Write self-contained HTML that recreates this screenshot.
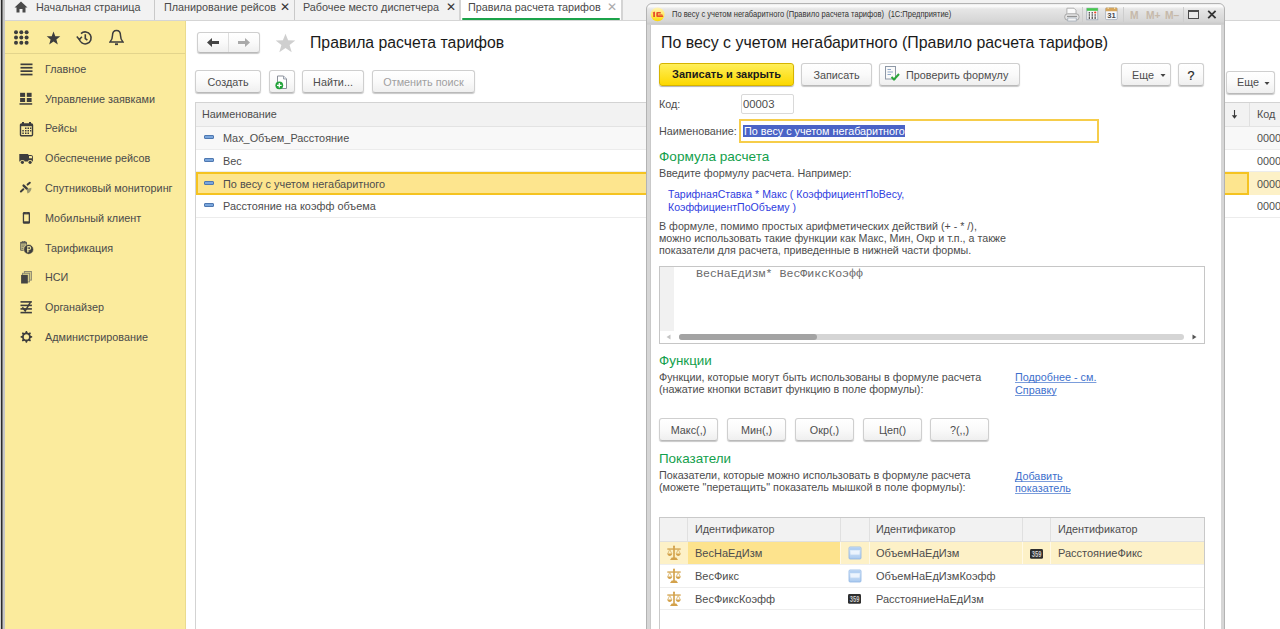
<!DOCTYPE html>
<html><head><meta charset="utf-8">
<style>
*{box-sizing:border-box}
html,body{margin:0;padding:0;width:1280px;height:629px;overflow:hidden;background:#fff;font-family:"Liberation Sans",sans-serif;font-size:10.8px;color:#4d4d4d}
.a{position:absolute}
.t{position:absolute;white-space:nowrap;line-height:12px}
/* frame */
#lf0{left:0;top:0;width:1px;height:629px;background:#cfcfcf}
#lf1{left:1px;top:0;width:1px;height:629px;background:#2a2a2a;box-shadow:1px 0 0 #7a7a7a}
#lf2{left:3px;top:0;width:2px;height:629px;background:#c6c6c6}
/* tab bar */
#tabs{left:5px;top:0;width:1275px;height:21px;background:#f2f2f2;border-bottom:1px solid #d5d5d5}
.tdiv{position:absolute;top:0;width:1px;height:20px;background:#c9c9c9}
/* sidebar */
#side{left:5px;top:21px;width:181px;height:608px;background:#fbeb9d;border-right:1px solid #eadb8e}
#sidesep{left:5px;top:53px;width:180px;height:1px;background:#e3d48c}
.si{position:absolute;left:45px;color:#4a4a4a}
/* buttons */
.btn{position:absolute;border:1px solid #cfcfcf;border-bottom-color:#b9b9b9;border-radius:3px;background:linear-gradient(#fff,#fafafa 50%,#efefef);box-shadow:0 1px 1px rgba(0,0,0,.22);text-align:center;color:#4d4d4d;line-height:23px;font-size:10.8px}
.bl{width:10px;height:4px;background:#7aa6dc;border:1px solid #4f78b0;border-radius:1px}
.g{color:#13a04c}
.lk{color:#3d6fcc;text-decoration:underline;text-decoration-color:#7b9ddb;text-decoration-skip-ink:none;text-underline-offset:1px}
</style></head>
<body>
<div id="lf0" class="a"></div><div id="lf1" class="a"></div><div id="lf2" class="a"></div>
<div id="tabs" class="a"></div>
<!-- tabs -->
<svg class="a" style="left:14px;top:1px" width="14" height="12" viewBox="0 0 14 12"><path d="M7 0.5 L13.5 6.5 L11.5 6.5 L11.5 11.5 L8.5 11.5 L8.5 8 L5.5 8 L5.5 11.5 L2.5 11.5 L2.5 6.5 L0.5 6.5 Z" fill="#4a4a4a"/></svg>
<div class="t" style="left:36px;top:1px;color:#4a4a4a">Начальная страница</div>
<div class="tdiv" style="left:154px"></div>
<div class="t" style="left:164px;top:1px;color:#4a4a4a">Планирование рейсов</div>
<div class="t" style="left:280px;top:1px;color:#333;font-size:12px">✕</div>
<div class="tdiv" style="left:294px"></div>
<div class="t" style="left:303px;top:1px;color:#4a4a4a">Рабочее место диспетчера</div>
<div class="t" style="left:446px;top:1px;color:#333;font-size:12px">✕</div>
<div class="tdiv" style="left:459px;width:2px;background:#d4d4d4"></div>
<div class="a" style="left:461px;top:0;width:160px;height:20px;background:#fff"></div>
<div class="a" style="left:462px;top:18px;width:158px;height:2px;background:#1ba34a;border-radius:1px"></div>
<div class="t" style="left:468px;top:1px;color:#4a4a4a">Правила расчета тарифов</div>
<div class="t" style="left:607px;top:1px;color:#aaa;font-size:12px">✕</div>
<div class="tdiv" style="left:621px;width:2px;background:#d4d4d4"></div>

<!-- sidebar -->
<div id="side" class="a"></div>
<div id="sidesep" class="a"></div>
<div class="t si" style="top:63px">Главное</div>
<div class="t si" style="top:93px">Управление заявками</div>
<div class="t si" style="top:122px">Рейсы</div>
<div class="t si" style="top:152px">Обеспечение рейсов</div>
<div class="t si" style="top:182px">Спутниковый мониторинг</div>
<div class="t si" style="top:212px">Мобильный клиент</div>
<div class="t si" style="top:242px">Тарификация</div>
<div class="t si" style="top:271px">НСИ</div>
<div class="t si" style="top:301px">Органайзер</div>
<div class="t si" style="top:331px">Администрирование</div>


<!-- sidebar icons -->
<svg class="a" style="left:13px;top:30px" width="17" height="16" viewBox="0 0 17 16" fill="#3d3d3d">
<circle cx="3" cy="2.3" r="2"/><circle cx="8.3" cy="2.3" r="2"/><circle cx="13.6" cy="2.3" r="2"/>
<circle cx="3" cy="7.5" r="2"/><circle cx="8.3" cy="7.5" r="2"/><circle cx="13.6" cy="7.5" r="2"/>
<circle cx="3" cy="12.7" r="2"/><circle cx="8.3" cy="12.7" r="2"/><circle cx="13.6" cy="12.7" r="2"/></svg>
<svg class="a" style="left:46px;top:31px" width="15" height="14" viewBox="0 0 15 14"><path d="M7.5 0.6 L9.3 5.2 L14.3 5.3 L10.4 8.4 L11.8 13.4 L7.5 10.5 L3.2 13.4 L4.6 8.4 L0.7 5.3 L5.7 5.2 Z" fill="#3d3d3d"/></svg>
<svg class="a" style="left:76px;top:30px" width="17" height="16" viewBox="0 0 17 16" fill="none" stroke="#3d3d3d" stroke-width="1.6"><path d="M3.2 8.5 A6 6 0 1 0 5 3.6"/><path d="M0.8 6.6 L3.3 9.6 L5.9 6.8" stroke-width="1.5"/><path d="M9.3 4.2 V8.6 L11.4 10.2"/></svg>
<svg class="a" style="left:109px;top:29px" width="15" height="17" viewBox="0 0 15 17" fill="none" stroke="#3d3d3d" stroke-width="1.5"><path d="M7.5 1.5 C4.5 1.5 3.5 4 3.5 6.5 C3.5 10 2.5 11.5 1 13 H14 C12.5 11.5 11.5 10 11.5 6.5 C11.5 4 10.5 1.5 7.5 1.5 Z"/><path d="M6 15.2 H9" stroke-width="1.8"/></svg>

<svg class="a" style="left:20px;top:63px" width="13" height="13" viewBox="0 0 13 13" fill="#3d3d3d"><rect x="0.5" y="0.5" width="12" height="1.7"/><rect x="0.5" y="3.9" width="12" height="1.7"/><rect x="0.5" y="7.3" width="12" height="1.7"/><rect x="0.5" y="10.7" width="12" height="1.7"/></svg>
<svg class="a" style="left:19px;top:92px" width="14" height="14" viewBox="0 0 14 14" fill="#3d3d3d"><rect x="1.1" y="0.8" width="5" height="4.1"/><rect x="7.8" y="0.8" width="4.8" height="4.1"/><rect x="1.1" y="6" width="5" height="4"/><rect x="7.8" y="6" width="4.8" height="4"/><rect x="0.5" y="11.2" width="12.7" height="1.5"/></svg>
<svg class="a" style="left:19px;top:121px" width="15" height="16" viewBox="0 0 15 16"><rect x="1.5" y="3" width="12" height="11.8" rx="1" fill="none" stroke="#3d3d3d" stroke-width="1.4"/><rect x="1.5" y="3" width="12" height="2.2" fill="#3d3d3d"/><rect x="3" y="1" width="2" height="3" fill="#3d3d3d"/><rect x="10" y="1" width="2" height="3" fill="#3d3d3d"/><g fill="#3d3d3d"><rect x="6" y="6.5" width="1.5" height="1.5"/><rect x="8.5" y="6.5" width="1.5" height="1.5"/><rect x="11" y="6.5" width="1.3" height="1.5"/><rect x="3.3" y="9" width="1.5" height="1.5"/><rect x="6" y="9" width="1.5" height="1.5"/><rect x="8.5" y="9" width="1.5" height="1.5"/><rect x="11" y="9" width="1.3" height="1.5"/><rect x="3.3" y="11.5" width="1.5" height="1.5"/><rect x="6" y="11.5" width="1.5" height="1.5"/><rect x="8.5" y="11.5" width="1.5" height="1.5"/></g></svg>
<svg class="a" style="left:19px;top:153px" width="16" height="12" viewBox="0 0 16 12"><path d="M0.3 1 H9.3 V2 H12 C13 2 13.9 2.8 13.9 3.8 V8.4 H0.3 Z" fill="#3d3d3d"/><path d="M10 3 H12.3 C12.7 3 13 3.6 13 4 V5.2 H10 Z" fill="#fbeb9d"/><circle cx="3.4" cy="9.3" r="2.4" fill="#fbeb9d"/><circle cx="11.1" cy="9.3" r="2.4" fill="#fbeb9d"/><circle cx="3.4" cy="9.3" r="1.6" fill="#3d3d3d"/><circle cx="11.1" cy="9.3" r="1.6" fill="#3d3d3d"/></svg>
<svg class="a" style="left:19px;top:181px" width="14" height="14" viewBox="0 0 14 14"><g stroke="#3d3d3d" stroke-linecap="round"><path d="M8.6 3.6 L10.8 1.7" stroke-width="2"/><path d="M1.9 10.5 L4.3 8.3" stroke-width="2"/><path d="M4.6 4.6 L7.8 7.6" stroke-width="2.4"/></g><path d="M7.6 8 L12.4 6.8 C12.6 9.5 11 11.8 8.4 12.5 Z" fill="#8a8a6a" opacity="0.85"/></svg>
<svg class="a" style="left:22px;top:211px" width="9" height="14" viewBox="0 0 9 14"><rect x="0.8" y="0.9" width="7.2" height="11.9" rx="1.3" fill="#3d3d3d"/><rect x="2.1" y="3.4" width="4.6" height="6.9" fill="#fbeb9d"/><rect x="3.4" y="1.7" width="2" height="0.6" fill="#7a7460"/></svg>
<svg class="a" style="left:19px;top:240px" width="15" height="15" viewBox="0 0 15 15"><rect x="1.2" y="1.8" width="6.8" height="9" rx="0.8" fill="#5e5e56"/><rect x="2.2" y="3.6" width="4.8" height="6.2" fill="#d8cf8e"/><g fill="#6a6a5e"><rect x="2.6" y="4.6" width="4" height="0.9"/><rect x="2.6" y="6.4" width="3" height="0.9"/><rect x="2.6" y="8.2" width="2" height="0.9"/></g><rect x="3.2" y="1" width="1.4" height="2" fill="#5e5e56"/><rect x="5" y="1" width="1.4" height="2" fill="#5e5e56"/><circle cx="9.6" cy="9.4" r="4.9" fill="#3d3d3d" stroke="#fbeb9d" stroke-width="0.6"/><path d="M8.8 12.6 V6.6 H10.2 C11.3 6.6 11.7 7.3 11.7 8.1 C11.7 8.9 11.1 9.5 10.2 9.5 H8" stroke="#e9df9c" stroke-width="1.1" fill="none"/><path d="M8 11 H10.3" stroke="#e9df9c" stroke-width="0.9"/></svg>
<svg class="a" style="left:20px;top:270px" width="13" height="14" viewBox="0 0 13 14"><rect x="4.4" y="1.5" width="7" height="8.6" fill="#d9cf8a" stroke="#8d8a72" stroke-width="1"/><rect x="2.5" y="3.3" width="7" height="8.6" fill="#d9cf8a" stroke="#8d8a72" stroke-width="1"/><rect x="1.1" y="4.9" width="6.7" height="8.6" fill="#444"/></svg>
<svg class="a" style="left:20px;top:300px" width="14" height="14" viewBox="0 0 14 14"><g fill="#3d3d3d"><rect x="0.5" y="1.1" width="11.4" height="1.6"/><rect x="0.5" y="4.6" width="11.4" height="1.6"/><rect x="0.5" y="8.1" width="11.4" height="1.6"/><rect x="0.5" y="11.8" width="11.4" height="1.6"/></g><path d="M10.5 2.2 L5.2 10.9 L2.4 7.3" stroke="#3d3d3d" stroke-width="1.5" fill="none"/></svg>
<svg class="a" style="left:20px;top:330px" width="14" height="14" viewBox="0 0 14 14"><path d="M9.70 5.50 L12.20 6.30 L12.20 7.50 L9.70 8.30 Z M9.72 8.24 L10.93 10.58 L10.08 11.43 L7.74 10.22 Z M7.80 10.20 L7.00 12.70 L5.80 12.70 L5.00 10.20 Z M5.06 10.22 L2.72 11.43 L1.87 10.58 L3.08 8.24 Z M3.10 8.30 L0.60 7.50 L0.60 6.30 L3.10 5.50 Z M3.08 5.56 L1.87 3.22 L2.72 2.37 L5.06 3.58 Z M5.00 3.60 L5.80 1.10 L7.00 1.10 L7.80 3.60 Z M7.74 3.58 L10.08 2.37 L10.93 3.22 L9.72 5.56 Z " fill="#3d3d3d"/><circle cx="6.4" cy="6.9" r="3.45" fill="none" stroke="#3d3d3d" stroke-width="1.7"/></svg>

<!-- main -->
<div class="btn" style="left:197px;top:32px;width:63px;height:21px"></div>
<div class="a" style="left:228px;top:33px;width:1px;height:19px;background:#dedede"></div>
<svg class="a" style="left:206px;top:37px" width="14" height="11" viewBox="0 0 14 11"><path d="M1 5.4 L6 0.9 V4 H13 V6.9 H6 V9.9 Z" fill="#454545"/></svg>
<svg class="a" style="left:237px;top:37px" width="14" height="11" viewBox="0 0 14 11"><path d="M13 5.4 L8 0.9 V4 H1 V6.9 H8 V9.9 Z" fill="#a9a9a9"/></svg>
<svg class="a" style="left:275px;top:33px" width="21" height="20" viewBox="0 0 21 20"><path d="M10.5 0.7 L13.1 7.3 L20.3 7.5 L14.6 11.9 L16.7 19.2 L10.5 15 L4.3 19.2 L6.4 11.9 L0.7 7.5 L7.9 7.3 Z" fill="#cfcfcf"/></svg>
<div class="t" style="left:310px;top:34px;font-size:15.8px;line-height:18px;color:#1a1a1a">Правила расчета тарифов</div>
<div class="btn" style="left:195px;top:70px;width:66px;height:23px">Создать</div>
<div class="btn" style="left:269px;top:70px;width:26px;height:23px"></div>
<svg class="a" style="left:275px;top:75px" width="14" height="15" viewBox="0 0 14 15"><path d="M2.5 1 H8.5 L11.5 4 V13.5 H2.5 Z" fill="#fff" stroke="#8a8f99" stroke-width="1"/><path d="M8.5 1 V4 H11.5" fill="#dfe6ef" stroke="#8a8f99" stroke-width="0.8"/><circle cx="4.3" cy="10.3" r="3.9" fill="#22a33a"/><path d="M4.3 8 V12.6 M2 10.3 H6.6" stroke="#fff" stroke-width="1.3"/></svg>
<div class="btn" style="left:302px;top:70px;width:62px;height:23px">Найти...</div>
<div class="btn" style="left:372px;top:70px;width:103px;height:23px;color:#a0a0a0">Отменить поиск</div>
<div class="btn" style="left:1226px;top:71px;width:49px;height:23px;text-align:left;padding-left:10px;line-height:21px">Еще</div><svg class="a" style="left:1264px;top:82px" width="6" height="3" viewBox="0 0 6 3"><path d="M0.5 0 H5.5 L3 3 Z" fill="#444"/></svg>

<!-- list -->
<div class="a" style="left:195px;top:102px;width:1px;height:527px;background:#d3d3d3"></div>
<div class="a" style="left:196px;top:102px;width:1084px;height:1px;background:#d3d3d3"></div>
<div class="a" style="left:196px;top:103px;width:1084px;height:23px;background:#f2f2f2"></div>
<div class="a" style="left:196px;top:126px;width:1084px;height:1px;background:#e3e3e3"></div>
<div class="t" style="left:202px;top:108px">Наименование</div>
<div class="a" style="left:1249px;top:103px;width:1px;height:23px;background:#e0e0e0"></div>
<svg class="a" style="left:1231px;top:110px" width="7" height="9" viewBox="0 0 7 9"><path d="M3.5 0 V7" stroke="#3a3a3a" stroke-width="1.1"/><path d="M0.8 5.3 H6.2 L3.5 8.8 Z" fill="#3a3a3a"/></svg>
<div class="t" style="left:1257px;top:108px">Код</div>
<!-- rows -->
<div class="a" style="left:196px;top:127px;width:1084px;height:22px;background:#f8f8f8"></div>
<div class="a" style="left:196px;top:149px;width:1084px;height:1px;background:#ececec"></div>
<div class="a" style="left:196px;top:171px;width:1084px;height:1px;background:#ececec"></div>
<div class="a" style="left:196px;top:172px;width:1053px;height:23px;background:#fde58e;border:2px solid #f5c320;border-right:none"></div>
<div class="a" style="left:1247px;top:172px;width:2px;height:23px;background:#f5c320"></div>
<div class="a" style="left:1249px;top:172px;width:31px;height:23px;background:#fdf1c7"></div>
<div class="a" style="left:196px;top:217px;width:1084px;height:1px;background:#ececec"></div>
<div class="a bl" style="left:204px;top:135px"></div>
<div class="a bl" style="left:204px;top:158px"></div>
<div class="a bl" style="left:204px;top:181px"></div>
<div class="a bl" style="left:204px;top:203px"></div>
<div class="t" style="left:223px;top:132px;font-size:10.9px">Max_Объем_Расстояние</div>
<div class="t" style="left:223px;top:155px;font-size:10.9px">Вес</div>
<div class="t" style="left:223px;top:178px;font-size:10.9px">По весу с учетом негабаритного</div>
<div class="t" style="left:223px;top:200px;font-size:10.9px">Расстояние на коэфф объема</div>
<div class="t" style="left:1257px;top:132px">00001</div>
<div class="t" style="left:1257px;top:155px">00002</div>
<div class="t" style="left:1257px;top:178px">00003</div>
<div class="t" style="left:1257px;top:200px">00004</div>

<!-- dialog -->
<div class="a" style="left:646px;top:3px;width:579px;height:640px;border-radius:6px 6px 0 0;background:#c9c9c9;border:1px solid #b3b3b3"></div>
<div class="a" style="left:647px;top:4px;width:577px;height:21px;border-radius:5px 5px 0 0;background:linear-gradient(#ececec 0px,#fdfdfd 2px,#e6e6e6 5px,#d6d6d6 17px,#cacaca 20px,#d4d4d4 21px)"></div>
<div class="a" style="left:647px;top:25px;width:3px;height:610px;background:#d6d6d6"></div>
<div class="a" style="left:1221px;top:25px;width:3px;height:610px;background:#d6d6d6"></div>
<div class="a" style="left:651px;top:25px;width:570px;height:610px;background:#fff"></div>
<!-- title bar -->
<svg class="a" style="left:650px;top:7px" width="15" height="15" viewBox="0 0 15 15"><defs><linearGradient id="lg" x1="0" y1="0" x2="0" y2="1"><stop offset="0" stop-color="#fff3b8"/><stop offset="0.5" stop-color="#ffec6a"/><stop offset="1" stop-color="#ffd800"/></linearGradient></defs><circle cx="7.6" cy="7.4" r="6.9" fill="url(#lg)"/><path d="M2.6 5.8 L4 4.8 H5 V9.9 H3.2 V6.5 Z" fill="#e8502a"/><path d="M6.3 6 Q6.3 5 7.3 5 H10.8 V6.6 H8 V8.3 H12.8 L13.3 9.9 H7.3 Q6.3 9.9 6.3 8.9 Z" fill="#e8502a"/><rect x="8.4" y="7" width="4" height="0.9" fill="#f08a3a"/></svg>
<div class="t" style="left:672px;top:9px;font-size:8.2px;line-height:11px;color:#333;transform:scaleX(0.92);transform-origin:0 0">По весу с учетом негабаритного (Правило расчета тарифов)&nbsp; (1С:Предприятие)</div>
<svg class="a" style="left:1064px;top:7px" width="16" height="15" viewBox="0 0 16 15"><path d="M2.9 1.2 H10 L12 3.2 V7.5 H2.9 Z" fill="#fafafa" stroke="#a8a8a8" stroke-width="0.9"/><rect x="0.7" y="6.8" width="14.4" height="6.4" rx="3" fill="#e4e4e4" stroke="#a6a6a6" stroke-width="1"/><path d="M3 9.4 H13" stroke="#8a8a8a" stroke-width="1"/><rect x="3.8" y="11" width="8.4" height="3" fill="#f4f4f4" stroke="#9aa6b4" stroke-width="0.7"/></svg>
<div class="a" style="left:1082px;top:7px;width:1px;height:15px;background:#cdcdcd"></div>
<svg class="a" style="left:1086px;top:7px" width="13" height="14" viewBox="0 0 13 14"><rect x="0.8" y="1.2" width="11" height="11.6" fill="#f6f6f6" stroke="#9aa4b4" stroke-width="0.8"/><rect x="0.8" y="1.2" width="11" height="2.6" fill="#45c84e"/><g fill="#555"><rect x="2.7" y="5" width="1.3" height="7"/><rect x="5.6" y="5" width="1.3" height="7"/><rect x="8.5" y="7" width="1.3" height="5"/></g><g fill="#f6f6f6"><rect x="2" y="6.6" width="8.5" height="0.6"/><rect x="2" y="8.8" width="8.5" height="0.6"/></g><circle cx="9.2" cy="5.5" r="1.1" fill="#ee4422"/></svg>
<svg class="a" style="left:1105px;top:7px" width="13" height="14" viewBox="0 0 13 14"><rect x="0.6" y="0.8" width="11.6" height="11.8" rx="1" fill="#f7f9fc" stroke="#a3abb8" stroke-width="0.8"/><path d="M0.6 1.8 Q0.6 0.8 1.6 0.8 H11.2 Q12.2 0.8 12.2 1.8 V4.2 H0.6 Z" fill="#d6a65c"/><rect x="2.6" y="0" width="1.2" height="2" fill="#f0dcb0"/><rect x="9" y="0" width="1.2" height="2" fill="#f0dcb0"/><text x="2.3" y="11.4" font-family="Liberation Sans" font-weight="bold" font-size="7.6" fill="#4a4a4a">31</text></svg>
<div class="a" style="left:1123px;top:7px;width:1px;height:15px;background:#cdcdcd"></div>
<div class="t" style="left:1130px;top:8.5px;font-size:11.8px;font-weight:bold;color:#c6b9aa;line-height:12px;transform:scaleX(0.87);transform-origin:0 0">M</div>
<div class="t" style="left:1146px;top:8.5px;font-size:11.8px;font-weight:bold;color:#c6b9aa;line-height:12px;transform:scaleX(0.87);transform-origin:0 0">M+</div>
<div class="t" style="left:1165px;top:8.5px;font-size:11.8px;font-weight:bold;color:#c6b9aa;line-height:12px;transform:scaleX(0.87);transform-origin:0 0">M&#8211;</div>
<div class="a" style="left:1183px;top:7px;width:1px;height:15px;background:#cdcdcd"></div>
<div class="a" style="left:1188px;top:10px;width:11px;height:9px;border:1px solid #4a4a4a;border-top-width:2px;background:#e9e9e9"></div>
<svg class="a" style="left:1207px;top:10px" width="10" height="9" viewBox="0 0 10 9"><path d="M1.2 0.8 L8.6 8.2 M8.6 0.8 L1.2 8.2" stroke="#333" stroke-width="1.8"/></svg>

<!-- dialog content -->
<div class="t" style="left:661px;top:34px;font-size:15.9px;line-height:18px;color:#1a1a1a">По весу с учетом негабаритного (Правило расчета тарифов)</div>
<div class="a" style="left:659px;top:63px;width:135px;height:23px;border:1px solid #d6b400;border-radius:3px;background:linear-gradient(#ffef5a,#fcd800);box-shadow:0 1px 1px rgba(0,0,0,.3)"></div>
<div class="t" style="left:659px;top:68px;width:135px;text-align:center;font-weight:bold;font-size:11px;color:#1a1a1a">Записать и закрыть</div>
<div class="btn" style="left:801px;top:63px;width:71px;height:23px">Записать</div>
<div class="btn" style="left:879px;top:63px;width:141px;height:23px;text-align:left;padding-left:26px">Проверить формулу</div>
<svg class="a" style="left:885px;top:66px" width="15" height="16" viewBox="0 0 15 16"><rect x="0.5" y="0.5" width="10" height="12.5" fill="#fafafa" stroke="#8e98a6" stroke-width="1"/><g stroke="#8fa8c8" stroke-width="1"><path d="M2.5 3.5 H6"/><path d="M2.5 6 H8"/><path d="M2.5 8.5 H6"/></g><path d="M6.5 11 L9 13.5 L14 8" stroke="#2aa53a" stroke-width="2" fill="none"/></svg>
<div class="btn" style="left:1121px;top:63px;width:50px;height:23px;text-align:left;padding-left:10px">Еще</div><svg class="a" style="left:1160px;top:74px" width="6" height="3" viewBox="0 0 6 3"><path d="M0.5 0 H5.5 L3 3 Z" fill="#444"/></svg>
<div class="btn" style="left:1178px;top:63px;width:26px;height:23px;color:#222;font-size:12.5px;line-height:24px;-webkit-text-stroke:0.2px #222">?</div>

<div class="t" style="left:659px;top:98px">Код:</div>
<div class="a" style="left:741px;top:94px;width:53px;height:20px;border:1px solid #d9d9d9;border-radius:2px"></div>
<div class="t" style="left:743px;top:98px;font-size:11.3px">00003</div>
<div class="t" style="left:659px;top:125px">Наименование:</div>
<div class="a" style="left:739px;top:119px;width:360px;height:24px;border:2px solid #f6cd4a"></div>
<div class="a" style="left:743px;top:125px;width:162px;height:12px;background:#4a63c6"></div>
<div class="t" style="left:744px;top:125px;color:#fff">По весу с учетом негабаритного</div>

<div class="t g" style="left:659px;top:149px;font-size:13.6px;line-height:16px">Формула расчета</div>
<div class="t" style="left:659px;top:167px">Введите формулу расчета. Например:</div>
<div class="t" style="left:668px;top:188px;color:#3040e0;line-height:13px;font-size:10.55px">ТарифнаяСтавка * Макс ( КоэффициентПоВесу,<br>КоэффициентПоОбъему )</div>
<div class="t" style="left:659px;top:220px;line-height:12.2px;font-size:10.7px">В формуле, помимо простых арифметических действий (+ - * /),<br>можно использовать такие функции как Макс, Мин, Окр и т.п., а также<br>показатели для расчета, приведенные в нижней части формы.</div>

<div class="a" style="left:659px;top:266px;width:546px;height:78px;border:1px solid #c6c6c6"></div>
<div class="a" style="left:660px;top:267px;width:14px;height:64px;background:#f1f1f1"></div>
<div class="t" style="left:696px;top:268px;font-family:'Liberation Mono',monospace;font-size:11.6px;color:#6a6a6a">ВесНаЕдИзм* ВесФиксКоэфф</div>
<div class="a" style="left:679px;top:334px;width:505px;height:6px;border-radius:3px;background:#d5d5d5"></div>
<div class="a" style="left:679px;top:334px;width:138px;height:6px;border-radius:3px;background:#a3a3a3"></div>
<svg class="a" style="left:666px;top:334px" width="5" height="6" viewBox="0 0 5 6"><path d="M4.5 0.5 L0.5 3 L4.5 5.5 Z" fill="#c4c4c4"/></svg>
<svg class="a" style="left:1192px;top:334px" width="5" height="6" viewBox="0 0 5 6"><path d="M0.5 0.5 L4.5 3 L0.5 5.5 Z" fill="#555"/></svg>

<div class="t g" style="left:659px;top:353px;font-size:13.4px;line-height:16px">Функции</div>
<div class="t" style="left:659px;top:371px;line-height:12.3px">Функции, которые могут быть использованы в формуле расчета<br>(нажатие кнопки вставит функцию в поле формулы):</div>
<div class="t lk" style="left:1015px;top:371px;line-height:12.6px">Подробнее - см.<br>Справку</div>
<div class="btn" style="left:659px;top:418px;width:59px;height:23px">Макс(,)</div>
<div class="btn" style="left:727px;top:418px;width:59px;height:23px">Мин(,)</div>
<div class="btn" style="left:795px;top:418px;width:59px;height:23px">Окр(,)</div>
<div class="btn" style="left:863px;top:418px;width:59px;height:23px">Цеп()</div>
<div class="btn" style="left:930px;top:418px;width:59px;height:23px">?(,,)</div>

<div class="t g" style="left:659px;top:451px;font-size:13.4px;line-height:16px">Показатели</div>
<div class="t" style="left:659px;top:469px;line-height:12px">Показатели, которые можно использовать в формуле расчета<br>(можете "перетащить" показатель мышкой в поле формулы):</div>
<div class="t lk" style="left:1015px;top:470px;line-height:12px">Добавить<br>показатель</div>

<!-- indicators table -->
<div class="a" style="left:659px;top:517px;width:546px;height:120px;border:1px solid #c9c9c9"></div>
<div class="a" style="left:660px;top:518px;width:544px;height:23px;background:#f2f2f2"></div>
<div class="a" style="left:660px;top:541px;width:544px;height:1px;background:#e0e0e0"></div>
<div class="a" style="left:687px;top:518px;width:1px;height:23px;background:#e0e0e0"></div>
<div class="a" style="left:840px;top:518px;width:1px;height:23px;background:#e0e0e0"></div>
<div class="a" style="left:869px;top:518px;width:1px;height:23px;background:#e0e0e0"></div>
<div class="a" style="left:1022px;top:518px;width:1px;height:23px;background:#e0e0e0"></div>
<div class="a" style="left:1050px;top:518px;width:1px;height:23px;background:#e0e0e0"></div>
<div class="t" style="left:695px;top:523px">Идентификатор</div>
<div class="t" style="left:876px;top:523px">Идентификатор</div>
<div class="t" style="left:1058px;top:523px">Идентификатор</div>
<div class="a" style="left:660px;top:542px;width:544px;height:22px;background:#fdf1c7"></div>
<div class="a" style="left:688px;top:542px;width:152px;height:22px;background:#fde38d"></div>
<div class="a" style="left:840px;top:542px;width:1px;height:22px;background:#fff9e6"></div>
<div class="a" style="left:869px;top:542px;width:1px;height:22px;background:#fff9e6"></div>
<div class="a" style="left:1022px;top:542px;width:1px;height:22px;background:#fff9e6"></div>
<div class="a" style="left:1050px;top:542px;width:1px;height:22px;background:#fff9e6"></div>
<div class="a" style="left:660px;top:564px;width:544px;height:1px;background:#eeeeee"></div>
<div class="a" style="left:660px;top:587px;width:544px;height:1px;background:#eeeeee"></div>
<div class="a" style="left:660px;top:609px;width:544px;height:1px;background:#eeeeee"></div>
<div class="t" style="left:695px;top:547px;font-size:11px">ВесНаЕдИзм</div>
<div class="t" style="left:876px;top:547px;font-size:11px">ОбъемНаЕдИзм</div>
<div class="t" style="left:1058px;top:547px;font-size:11px">РасстояниеФикс</div>
<div class="t" style="left:695px;top:570px;font-size:11px">ВесФикс</div>
<div class="t" style="left:876px;top:570px;font-size:11px">ОбъемНаЕдИзмКоэфф</div>
<div class="t" style="left:695px;top:593px;font-size:11px">ВесФиксКоэфф</div>
<div class="t" style="left:876px;top:593px;font-size:11px">РасстояниеНаЕдИзм</div>
<svg class="a" style="left:664px;top:544px" width="20" height="20" viewBox="0 0 20 20"><g fill="#d3a14a"><rect x="9.2" y="2.5" width="1.6" height="12"/><path d="M6 16 H14 L12.3 13.6 H7.7 Z"/><rect x="3.3" y="4.4" width="13.4" height="1.3"/><path d="M3.3 9.6 H8.2 C8.1 11.3 7 12 5.75 12 C4.5 12 3.4 11.3 3.3 9.6 Z"/><path d="M11.8 9.6 H16.7 C16.6 11.3 15.5 12 14.25 12 C13 12 11.9 11.3 11.8 9.6 Z"/><circle cx="10" cy="2.6" r="1"/></g><g stroke="#d8b060" stroke-width="0.8" fill="none"><path d="M5.75 5.4 L3.7 9.8 M5.75 5.4 L7.8 9.8 M14.25 5.4 L12.2 9.8 M14.25 5.4 L16.3 9.8"/></g></svg>
<svg class="a" style="left:664px;top:567px" width="20" height="20" viewBox="0 0 20 20"><g fill="#d3a14a"><rect x="9.2" y="2.5" width="1.6" height="12"/><path d="M6 16 H14 L12.3 13.6 H7.7 Z"/><rect x="3.3" y="4.4" width="13.4" height="1.3"/><path d="M3.3 9.6 H8.2 C8.1 11.3 7 12 5.75 12 C4.5 12 3.4 11.3 3.3 9.6 Z"/><path d="M11.8 9.6 H16.7 C16.6 11.3 15.5 12 14.25 12 C13 12 11.9 11.3 11.8 9.6 Z"/><circle cx="10" cy="2.6" r="1"/></g><g stroke="#d8b060" stroke-width="0.8" fill="none"><path d="M5.75 5.4 L3.7 9.8 M5.75 5.4 L7.8 9.8 M14.25 5.4 L12.2 9.8 M14.25 5.4 L16.3 9.8"/></g></svg>
<svg class="a" style="left:664px;top:590px" width="20" height="20" viewBox="0 0 20 20"><g fill="#d3a14a"><rect x="9.2" y="2.5" width="1.6" height="12"/><path d="M6 16 H14 L12.3 13.6 H7.7 Z"/><rect x="3.3" y="4.4" width="13.4" height="1.3"/><path d="M3.3 9.6 H8.2 C8.1 11.3 7 12 5.75 12 C4.5 12 3.4 11.3 3.3 9.6 Z"/><path d="M11.8 9.6 H16.7 C16.6 11.3 15.5 12 14.25 12 C13 12 11.9 11.3 11.8 9.6 Z"/><circle cx="10" cy="2.6" r="1"/></g><g stroke="#d8b060" stroke-width="0.8" fill="none"><path d="M5.75 5.4 L3.7 9.8 M5.75 5.4 L7.8 9.8 M14.25 5.4 L12.2 9.8 M14.25 5.4 L16.3 9.8"/></g></svg>
<svg class="a" style="left:848px;top:544px" width="14" height="16" viewBox="0 0 14 16"><defs><linearGradient id="eg0" x1="0" y1="0" x2="0" y2="1"><stop offset="0" stop-color="#e8f2fc"/><stop offset="1" stop-color="#a9c9ef"/></linearGradient></defs><rect x="1" y="3" width="12" height="12" rx="1" fill="url(#eg0)" stroke="#8fb5e3" stroke-width="0.8"/><rect x="1.4" y="3.4" width="11.2" height="2.6" fill="#b3d0f2"/><rect x="2.5" y="6.6" width="9" height="4" fill="#f4f9ff" opacity="0.8"/></svg>
<svg class="a" style="left:848px;top:567px" width="14" height="16" viewBox="0 0 14 16"><defs><linearGradient id="eg1" x1="0" y1="0" x2="0" y2="1"><stop offset="0" stop-color="#e8f2fc"/><stop offset="1" stop-color="#a9c9ef"/></linearGradient></defs><rect x="1" y="3" width="12" height="12" rx="1" fill="url(#eg1)" stroke="#8fb5e3" stroke-width="0.8"/><rect x="1.4" y="3.4" width="11.2" height="2.6" fill="#b3d0f2"/><rect x="2.5" y="6.6" width="9" height="4" fill="#f4f9ff" opacity="0.8"/></svg>
<svg class="a" style="left:848px;top:594px" width="13" height="10" viewBox="0 0 13 10"><rect x="0" y="0" width="13" height="9.8" rx="1.4" fill="#2e2e2e"/><text x="1.8" y="8.2" font-family="Liberation Sans" font-weight="bold" font-size="8.4" textLength="9.6" lengthAdjust="spacingAndGlyphs" fill="#c9c9c9">359</text></svg>
<svg class="a" style="left:1030px;top:549px" width="13" height="10" viewBox="0 0 13 10"><rect x="0" y="0" width="13" height="9.8" rx="1.4" fill="#2e2e2e"/><text x="1.8" y="8.2" font-family="Liberation Sans" font-weight="bold" font-size="8.4" textLength="9.6" lengthAdjust="spacingAndGlyphs" fill="#c9c9c9">359</text></svg>
</body></html>
